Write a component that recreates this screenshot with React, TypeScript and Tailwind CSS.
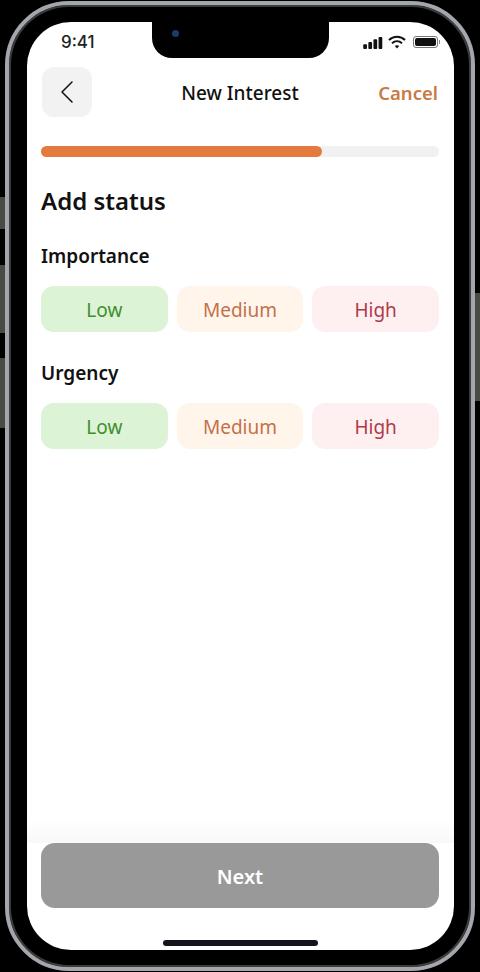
import { ChevronLeft } from 'lucide-react';

const FONT = "font-['Noto_Sans',sans-serif]";

const levels = [
  { label: 'Low', box: 'bg-[#dcf3d6]', text: 'text-[#3f8f2c]' },
  { label: 'Medium', box: 'bg-[#fff5ea]', text: 'text-[#c2714a]' },
  { label: 'High', box: 'bg-[#fef0f0]', text: 'text-[#b03a4a]' },
];

function StatusBar() {
  return (
    <div className="flex h-[36px] items-center justify-between pl-[34px] pr-[14px] pt-[4px]">
      <span className="font-['Inter',sans-serif] text-[17px] font-medium leading-[20px] text-[#222]">9:41</span>
      <div className="flex items-center gap-[5px]">
        <svg width="20" height="13" viewBox="0 0 21 14" fill="#111">
          <rect x="0" y="9" width="4" height="5" rx="1" />
          <rect x="5.5" y="6.5" width="4" height="7.5" rx="1" />
          <rect x="11" y="3.5" width="4" height="10.5" rx="1" />
          <rect x="16.5" y="1" width="4" height="13" rx="1" />
        </svg>
        <svg width="18" height="14" viewBox="0 0 18 14" fill="none" stroke="#111" strokeWidth="2">
          <path d="M1 5 C5.5 0.5 12.5 0.5 17 5" />
          <path d="M4 8.2 C7 5.5 11 5.5 14 8.2" />
          <path d="M9 13.5 L6.8 11 C8 10 10 10 11.2 11 Z" fill="#111" stroke="none" />
        </svg>
        <div className="ml-[2px] flex items-center">
          <div className="h-[12px] w-[25px] rounded-[3px] border border-[#777] bg-white p-[1px]">
            <div className="h-full w-full rounded-[2px] bg-[#111]" />
          </div>
          <div className="ml-[1px] h-[4px] w-[1px] bg-[#888]" />
        </div>
      </div>
    </div>
  );
}

function LevelRow() {
  return (
    <div className="grid grid-cols-3 gap-[9px]">
      {levels.map((l) => (
        <div
          key={l.label}
          className={`flex h-[46px] items-center justify-center rounded-[13px] pt-[2px] text-[19px] ${l.box} ${l.text}`}
        >
          {l.label}
        </div>
      ))}
    </div>
  );
}

export default function App() {
  return (
    <div className="relative h-[972px] w-[480px] overflow-hidden bg-black">
      {/* side buttons */}
      <div className="absolute left-0 top-[197px] h-[32px] w-[5px] bg-[#4a4a45]" />
      <div className="absolute left-0 top-[265px] h-[68px] w-[5px] bg-[#4a4a45]" />
      <div className="absolute left-0 top-[358px] h-[70px] w-[5px] bg-[#4a4a45]" />
      <div className="absolute right-0 top-[293px] h-[108px] w-[5px] bg-[#4a4a45]" />

      <div className="absolute left-[5px] top-[1px] h-[970px] w-[470px] rounded-[64px] border-[4px] border-[#a3a6ab] bg-black pl-[18px] pt-[17px] shadow-[inset_0_0_0_2px_#3a3b3d]">
        <div className={`relative flex h-[928px] w-[427px] flex-col overflow-hidden rounded-[44px] bg-white ${FONT}`}>
          {/* notch */}
          <div className="absolute left-[125px] top-0 h-[36px] w-[177px] rounded-b-[20px] bg-black">
            <div className="absolute left-[20px] top-[8px] h-[7px] w-[7px] rounded-full bg-[#1c3a6e]" />
          </div>

          <StatusBar />

          <div className="flex flex-1 flex-col pl-[14px] pr-[15px] pt-[9px]">
            {/* header */}
            <div className="relative flex items-center justify-between">
              <div className="ml-[1px] flex h-[50px] w-[50px] items-center justify-center rounded-[12px] bg-[#f2f2f2]">
                <ChevronLeft size={40} strokeWidth={0.9} className="text-[#111]" />
              </div>
              <span className="absolute left-0 right-0 pt-[2px] text-center text-[19px] font-medium text-[#111]">
                New Interest
              </span>
              <span className="mr-[1px] pt-[2px] text-[18.5px] font-semibold text-[#c97a45]">Cancel</span>
            </div>

            {/* progress */}
            <div className="mt-[29px] h-[11px] w-full rounded-full bg-[#f1f1f1]">
              <div className="h-full rounded-full bg-[#e57a3f]" style={{ width: `${(281 / 398) * 100}%` }} />
            </div>

            <h1 className="mt-[28px] text-[24px] font-semibold leading-[32px] text-[#111]">Add status</h1>

            <h2 className="mt-[26px] text-[19px] font-semibold leading-[26px] text-[#111]">Importance</h2>
            <div className="mt-[17px]">
              <LevelRow />
            </div>

            <h2 className="mt-[28px] text-[19px] font-semibold leading-[26px] text-[#111]">Urgency</h2>
            <div className="mt-[17px]">
              <LevelRow />
            </div>

            <div className="flex-1" />

            {/* next */}
            <div className="-ml-[14px] -mr-[15px] bg-gradient-to-b from-white to-[#f8f8f8] pt-[24px]" />
            <button className="flex h-[65px] w-full items-center justify-center rounded-[14px] bg-[#999999] pt-[2px] text-[20px] font-semibold text-white">
              Next
            </button>

            <div className="mx-auto mb-[4px] mt-[32px] h-[6px] w-[155px] rounded-full bg-[#14141c]" />
          </div>
        </div>
      </div>
    </div>
  );
}
